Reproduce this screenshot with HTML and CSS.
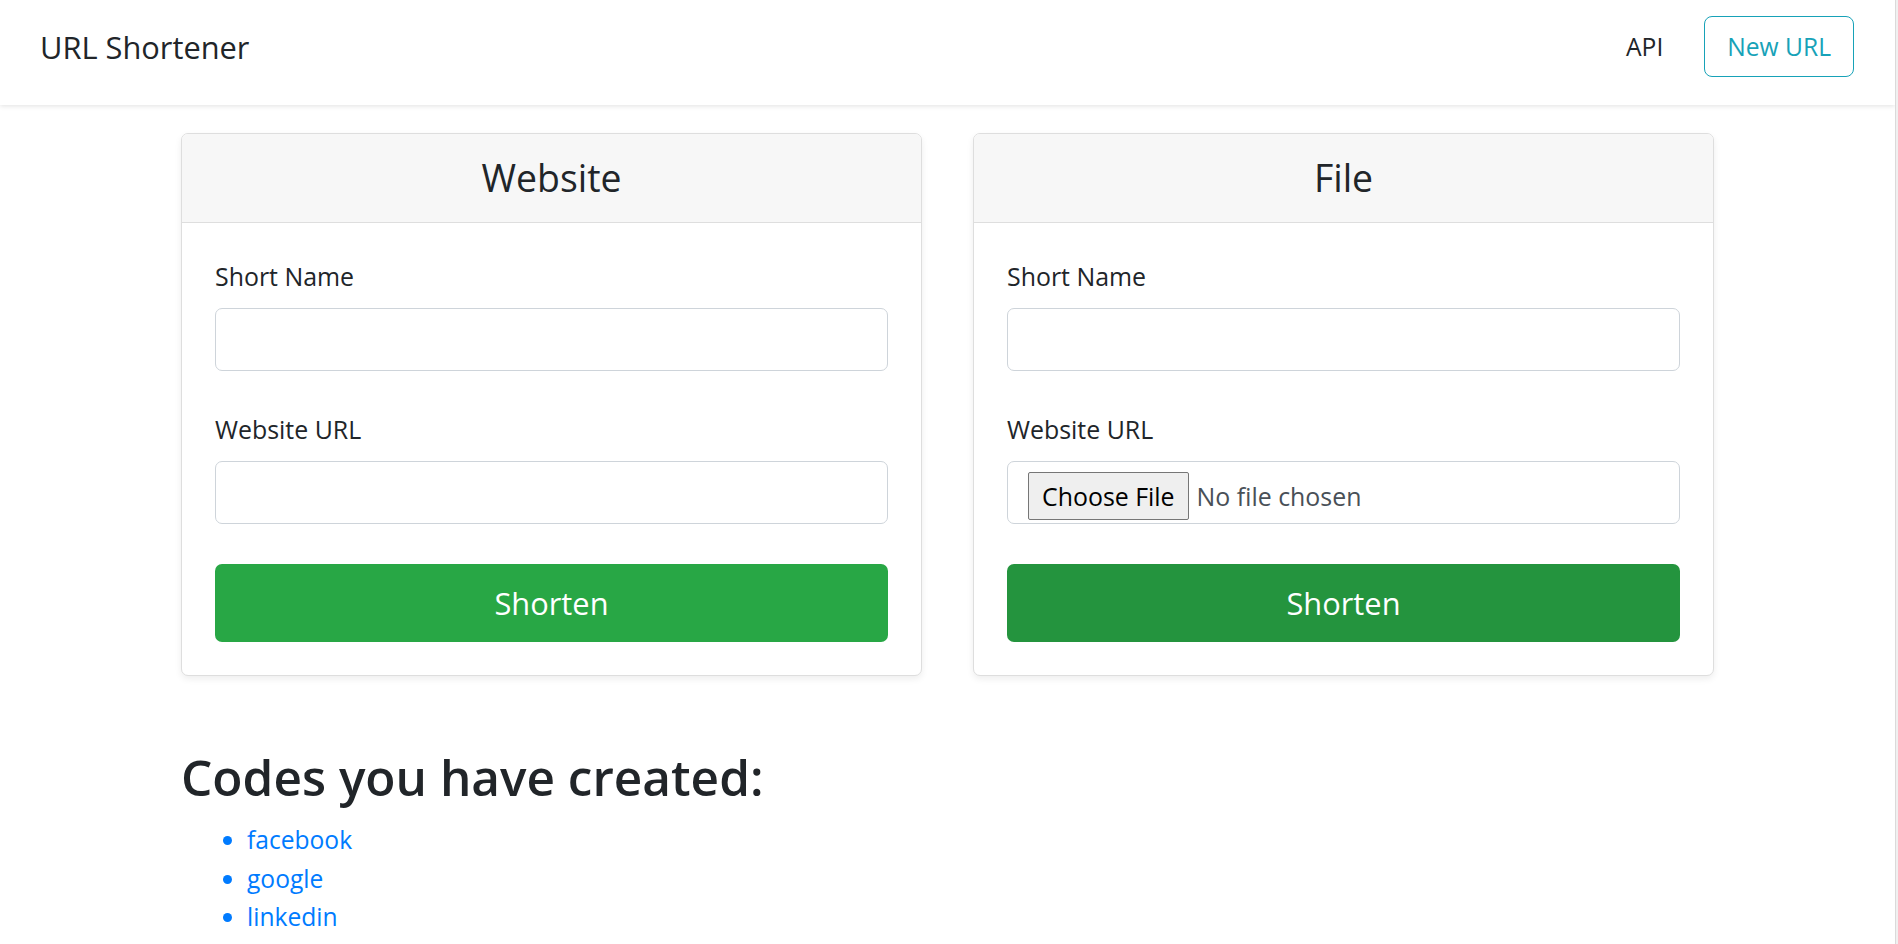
FILE: index.html
```html
<!DOCTYPE html>
<html lang="en">
<head>
<meta charset="utf-8">
<title>URL Shortener</title>
<link rel="stylesheet" href="styles.css">
</head>
<body>
<nav class="navbar">
  <a class="brand" href="#">URL Shortener</a>
  <div class="nav-right">
    <a class="nav-link" href="#">API</a>
    <a class="btn-outline-info" href="#">New URL</a>
  </div>
</nav>
<main class="container">
  <div class="cards">
    <section class="card">
      <div class="card-header"><h4 class="card-title">Website</h4></div>
      <form class="card-body">
        <div class="form-group">
          <label class="label">Short Name</label>
          <input class="form-control" type="text">
        </div>
        <div class="form-group last">
          <label class="label">Website URL</label>
          <input class="form-control" type="text">
        </div>
        <button class="btn-success" type="button">Shorten</button>
      </form>
    </section>
    <section class="card">
      <div class="card-header"><h4 class="card-title">File</h4></div>
      <form class="card-body">
        <div class="form-group">
          <label class="label">Short Name</label>
          <input class="form-control" type="text">
        </div>
        <div class="form-group last">
          <label class="label">Website URL</label>
          <div class="form-control file-control">
            <span class="file-button">Choose File</span>
            <span class="file-name">No file chosen</span>
          </div>
        </div>
        <button class="btn-success hover" type="button">Shorten</button>
      </form>
    </section>
  </div>
  <h2 class="codes-title">Codes you have created:</h2>
  <ul class="codes-list">
    <li><a href="#">facebook</a></li>
    <li><a href="#">google</a></li>
    <li><a href="#">linkedin</a></li>
  </ul>
</main>
<div class="scrollbar"></div>
</body>
</html>
```
FILE: styles.css
```css
html {
  scrollbar-width: none;
}
::-webkit-scrollbar {
  display: none;
}
* {
  box-sizing: border-box;
}
body {
  margin: 0 3px 0 0;
  background: #fff;
  font-family: "Open Sans", "Noto Sans", sans-serif;
  font-size: 24.9px;
  line-height: 40px;
  color: #212529;
}
a {
  text-decoration: none;
}

/* navbar */
.navbar {
  position: relative;
  z-index: 2;
  height: 105px;
  background: #fff;
  box-shadow: 0 1px 5px rgba(0, 0, 0, 0.12);
  display: flex;
  align-items: center;
  justify-content: space-between;
  padding: 16px 41px 28px 40px;
}
.brand {
  font-size: 30.8px;
  line-height: 50px;
  color: #212529;
}
.nav-right {
  display: flex;
  align-items: center;
}
.nav-link {
  color: #212529;
  margin-right: 41px;
  font-size: 24.6px;
  line-height: 40px;
}
.btn-outline-info {
  display: block;
  color: #17a2b8;
  border: 1px solid #17a2b8;
  border-radius: 8px;
  padding: 10px 22px 9px;
  font-size: 24.6px;
  line-height: 40px;
}

/* layout */
.container {
  width: 1533px;
  margin: 0 auto;
  padding-top: 28px;
}
.cards {
  display: grid;
  grid-template-columns: 1fr 1fr;
  column-gap: 51px;
}
.card {
  background: #fff;
  border: 1px solid #dedede;
  border-radius: 7px;
  box-shadow: 0 3px 7px rgba(0, 0, 0, 0.07);
  overflow: hidden;
}
.card-header {
  background: #f7f7f7;
  border-bottom: 1px solid #dedede;
  padding: 20px;
  text-align: center;
}
.card-title {
  margin: 0;
  font-size: 37.4px;
  line-height: 48px;
  font-weight: 400;
}
.card-body {
  padding: 33px;
  margin: 0;
}
.form-group {
  margin-bottom: 38px;
}
.form-group.last {
  margin-bottom: 40px;
}
.label {
  display: block;
  line-height: 40px;
  margin-bottom: 12px;
}
.form-control {
  display: block;
  width: 100%;
  height: 63px;
  border: 1px solid #ced4da;
  border-radius: 7px;
  background: #fff;
  font: inherit;
  color: #495057;
  padding: 10px 20px;
  margin: 0;
}
.file-control {
  display: flex;
  align-items: flex-start;
  padding: 10px 20px 0;
}
.file-button {
  display: block;
  height: 48px;
  line-height: 46px;
  padding: 0 13px;
  background: #efefef;
  border: 1px solid #767676;
  border-radius: 2px;
  color: #000;
  margin-right: 8px;
}
.file-name {
  line-height: 48px;
  color: #495057;
}
.btn-success {
  display: block;
  width: 100%;
  height: 78px;
  border: none;
  border-radius: 7px;
  background: #28a745;
  color: #fff;
  font: inherit;
  font-size: 30.8px;
  line-height: 50px;
  padding: 0;
}
.btn-success.hover {
  background: #24943e;
}

/* codes */
.codes-title {
  margin: 69px 0 12px;
  font-size: 49.5px;
  line-height: 64px;
  font-weight: 600;
}
.codes-list {
  margin: 0 0 27px;
  padding-left: 66px;
  font-size: 24.6px;
  line-height: 38.7px;
}
.codes-list li::marker {
  color: #007bff;
}
.codes-list a {
  color: #007bff;
}

.scrollbar {
  position: fixed;
  top: 0;
  right: 0;
  bottom: 0;
  width: 3px;
  background: #f0f0f0;
  border-left: 1px solid #dadada;
}
```
